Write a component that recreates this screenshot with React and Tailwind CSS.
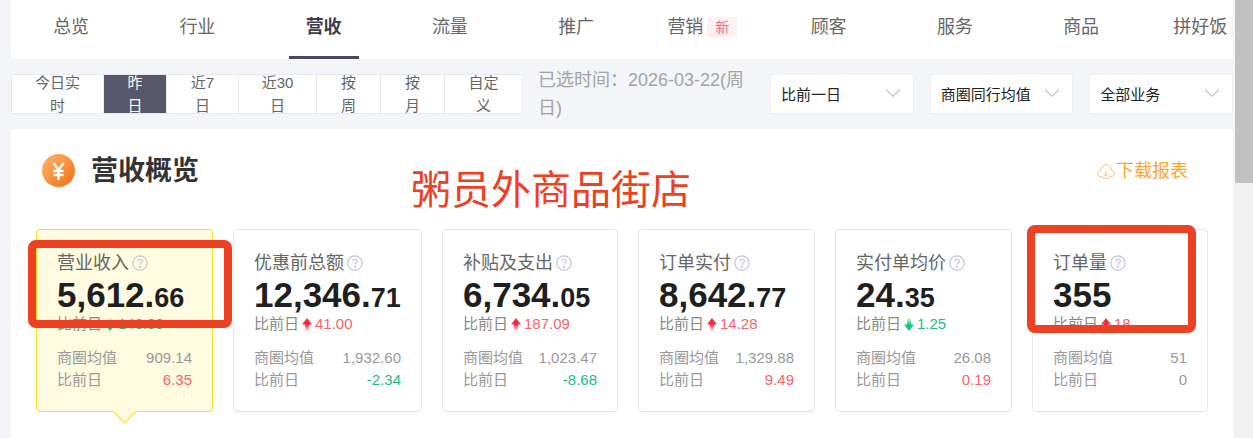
import { ChevronDown } from 'lucide-react';

const tabs = ['总览', '行业', '营收', '流量', '推广', '营销', '顾客', '服务', '商品'];
const ranges = [
  { label: '今日实时', width: 'w-[92px]' },
  { label: '昨日', width: 'w-[63px]', active: true },
  { label: '近7日', width: 'w-[72px]' },
  { label: '近30日', width: 'w-[78px]' },
  { label: '按周', width: 'w-[64px]' },
  { label: '按月', width: 'w-[64px]' },
  { label: '自定义', width: 'w-[77px]' },
];
const selects = ['比前一日', '商圈同行均值', '全部业务'];
const cards = [
  { title: '营业收入', main: '5,612.', dec: '66', diff: '148.99', dir: 'down', avg: '909.14', prev: '6.35', prevColor: 'text-[#f9636b]', width: 'w-[177px]', active: true },
  { title: '优惠前总额', main: '12,346.', dec: '71', diff: '41.00', dir: 'up', avg: '1,932.60', prev: '-2.34', prevColor: 'text-[#1dbb88]', width: 'w-[189px]' },
  { title: '补贴及支出', main: '6,734.', dec: '05', diff: '187.09', dir: 'up', avg: '1,023.47', prev: '-8.68', prevColor: 'text-[#1dbb88]', width: 'w-[176px]' },
  { title: '订单实付', main: '8,642.', dec: '77', diff: '14.28', dir: 'up', avg: '1,329.88', prev: '9.49', prevColor: 'text-[#f9636b]', width: 'w-[177px]' },
  { title: '实付单均价', main: '24.', dec: '35', diff: '1.25', dir: 'down', avg: '26.08', prev: '0.19', prevColor: 'text-[#f9636b]', width: 'w-[177px]' },
  { title: '订单量', main: '355', dec: '', diff: '18', dir: 'up', avg: '51', prev: '0', prevColor: 'text-[#999]', width: 'w-[176px]' },
];

function Arrow({ dir }) {
  const up = dir === 'up';
  const color = up ? '#fb2b3f' : '#14c97f';
  const id = up ? 'arrow-up' : 'arrow-down';
  return (
    <svg width="10" height="13" viewBox="0 0 10 13" className="mx-[3px] shrink-0">
      <defs>
        <linearGradient id={id} x1="0" y1={up ? '0' : '1'} x2="0" y2={up ? '1' : '0'}>
          <stop offset="0.5" stopColor={color} />
          <stop offset="1" stopColor={color} stopOpacity="0.08" />
        </linearGradient>
      </defs>
      {up ? (
        <path d="M5 0 L10 6.5 H7 V13 H3 V6.5 H0 Z" fill={`url(#${id})`} />
      ) : (
        <path d="M5 13 L10 6.5 H7 V0 H3 V6.5 H0 Z" fill={`url(#${id})`} />
      )}
    </svg>
  );
}

function HelpIcon() {
  return (
    <svg width="16" height="16" viewBox="0 0 16 16" className="shrink-0" fill="none" stroke="#c3c6d4" strokeWidth="1.2">
      <circle cx="8" cy="8" r="7.2" />
      <path d="M5.6 6.2 C5.7 3.6 10.4 3.6 10.4 6.2 C10.4 7.9 8 7.8 8 9.8" />
      <circle cx="8" cy="11.9" r="0.5" fill="#c3c6d4" />
    </svg>
  );
}

function CloudIcon() {
  return (
    <svg width="18" height="16" viewBox="0 0 18 16" className="shrink-0" fill="none" stroke="#ffbd80" strokeWidth="1">
      <path d="M4.6 13.6 C2.2 13.8 .6 12.4 .6 10.6 C.6 8.8 2.1 7.5 3.8 7.4 C4.2 4.2 6.4 1.6 9.2 1.6 C12 1.6 14 3.9 14.4 7 C16.2 7.3 17.4 8.7 17.4 10.5 C17.4 12.4 15.8 13.8 13.4 13.6" />
      <path d="M4.6 13.6 C5.6 16 12.4 16 13.4 13.6" />
      <path d="M9 8 V13 M7.2 11.2 L9 13 L10.8 11.2" />
    </svg>
  );
}

function YenIcon() {
  return (
    <svg width="33" height="33" viewBox="0 0 33 33" className="shrink-0">
      <defs>
        <linearGradient id="yen-bg" x1="0" y1="0" x2="1" y2="1">
          <stop offset="0" stopColor="#ffb56f" />
          <stop offset="1" stopColor="#f26f12" />
        </linearGradient>
      </defs>
      <circle cx="16.5" cy="16.5" r="16.5" fill="url(#yen-bg)" />
      <path d="M11.5 9 L16.5 16 L21.5 9 M11.5 17 H21.5 M11.5 21 H21.5 M16.5 16 V26" fill="none" stroke="#fff" strokeWidth="2.4" />
    </svg>
  );
}

function MetricCard({ card }) {
  return (
    <div
      className={`relative h-[183px] shrink-0 rounded-[4px] border px-5 pt-[22px] ${card.width} ${
        card.active ? 'border-[#ffdd1f] bg-[#fffbe0]' : 'border-[#e6e6e6] bg-white'
      }`}
    >
      <div className="flex h-[22px] items-center gap-[3px] whitespace-nowrap text-[18px] text-[#666]">
        {card.title}
        <HelpIcon />
      </div>
      <div className="mt-[1px] flex h-[40px] items-baseline font-bold leading-[40px] text-[#1f1f1f]">
        <span className="text-[35px]">{card.main}</span>
        <span className="text-[27px]">{card.dec}</span>
      </div>
      <div className="mt-[-2px] flex h-[22px] items-center whitespace-nowrap text-[15px] text-[#888]">
        比前日
        <Arrow dir={card.dir} />
        <span className={card.dir === 'up' ? 'text-[#f9636b]' : 'text-[#1dbb88]'}>{card.diff}</span>
      </div>
      <div className="mt-[13px] flex h-[21px] items-center justify-between text-[15px] text-[#999]">
        <span>商圈均值</span>
        <span>{card.avg}</span>
      </div>
      <div className="flex h-[22px] items-center justify-between text-[15px] text-[#999]">
        <span>比前日</span>
        <span className={card.prevColor}>{card.prev}</span>
      </div>
      {card.active && (
        <div className="absolute bottom-[-9px] left-[78.5px] h-[17px] w-[17px] rotate-45 border-b border-r border-[#ffdd1f] bg-[#fffbe0]" />
      )}
    </div>
  );
}

export default function App() {
  return (
    <div className="relative flex h-[438px] w-[1253px] overflow-hidden bg-[#f4f5f9] font-['Liberation_Sans','Noto_Sans_CJK_SC',sans-serif]">
      <main className="ml-[11px] w-[1222px] shrink-0">
        <nav className="flex h-[59px] overflow-hidden bg-white text-[18px] text-[#666]">
          {tabs.map((tab, i) => (
            <div
              key={tab}
              className={`relative flex h-full w-[126.25px] shrink-0 items-center justify-center pb-[5px] ${i === 0 ? 'ml-[-3px]' : ''} ${
                tab === '营收' ? 'font-bold text-[#3d3d50]' : ''
              }`}
            >
              {tab}
              {tab === '营销' && (
                <span className="ml-1 flex h-[20px] w-[30px] items-center justify-center bg-[#fff0f1] text-[14px] text-[#ff6b75]">新</span>
              )}
              {tab === '营收' && <span className="absolute bottom-0 left-[28px] h-[3px] w-[70px] bg-[#4a4a5e]" />}
            </div>
          ))}
          <div className="flex h-full w-[126px] shrink-0 items-center pb-[5px] pl-[29px]">
            拼好饭
            <span className="ml-1 h-[20px] w-[30px] shrink-0 bg-[#fff0f1]" />
          </div>
        </nav>

        <div className="my-[15px] flex h-[40px] items-center">
          <div className="flex h-full w-[512px] shrink-0 overflow-hidden rounded-[2px] border border-[#e8e9ef] bg-white text-[15px] leading-[23px] text-[#666]">
            {ranges.map((r) => (
              <div
                key={r.label}
                className={`flex h-full shrink-0 items-center justify-center overflow-hidden border-r border-[#e8e9ef] px-5 text-center last:border-r-0 ${r.width} ${
                  r.active ? 'bg-[#565869] text-white' : ''
                }`}
              >
                {r.label}
              </div>
            ))}
          </div>
          <div className="ml-[15px] w-[220px] shrink-0 text-[18px] leading-[28px] text-[#a3a3a3]">已选时间：2026-03-22(周日)</div>
          <div className="ml-[12px] flex flex-1 gap-[16px]">
            {selects.map((s) => (
              <div key={s} className="flex h-[40px] flex-1 items-center justify-between rounded-[2px] border border-[#eeeff3] bg-white pl-[10px] pr-[7px] text-[15px] text-[#222]">
                <span className="mt-[3px]">{s}</span>
                <ChevronDown size={26} strokeWidth={1.2} className="mb-[2px] text-[#c8c8c8]" />
              </div>
            ))}
          </div>
        </div>

        <section className="h-[309px] rounded-t-[4px] bg-white pl-[25px] pt-[25px]">
          <div className="flex h-[33px] items-center pl-[6px]">
            <YenIcon />
            <h1 className="ml-[16px] mt-[2px] text-[27px] font-bold text-[#333]">营收概览</h1>
            <a className="ml-auto mr-[45px] mt-[1px] flex items-center gap-[1px] text-[18px] text-[#ffa329]">
              <CloudIcon />
              下载报表
            </a>
          </div>
          <div className="mt-[42px] flex gap-[20px]">
            {cards.map((card) => (
              <MetricCard key={card.title} card={card} />
            ))}
          </div>
        </section>
      </main>

      <div className="ml-[2px] w-[18px] shrink-0 bg-[#f1f1f1]">
        <div className="h-[183px] bg-[#c1c1c1]" />
      </div>

      {/* annotations drawn over the screenshot */}
      <div className="absolute left-[411px] top-[165px] text-[40px] leading-[50px] text-[#ee4023]">粥员外商品街店</div>
      <div className="absolute left-[28px] top-[240px] h-[88px] w-[204px] rounded-[8px] border-[8px] border-[#ee4023]" />
      <div className="absolute left-[1027px] top-[225px] h-[108px] w-[169px] rounded-[8px] border-[8px] border-[#ee4023]" />
    </div>
  );
}
